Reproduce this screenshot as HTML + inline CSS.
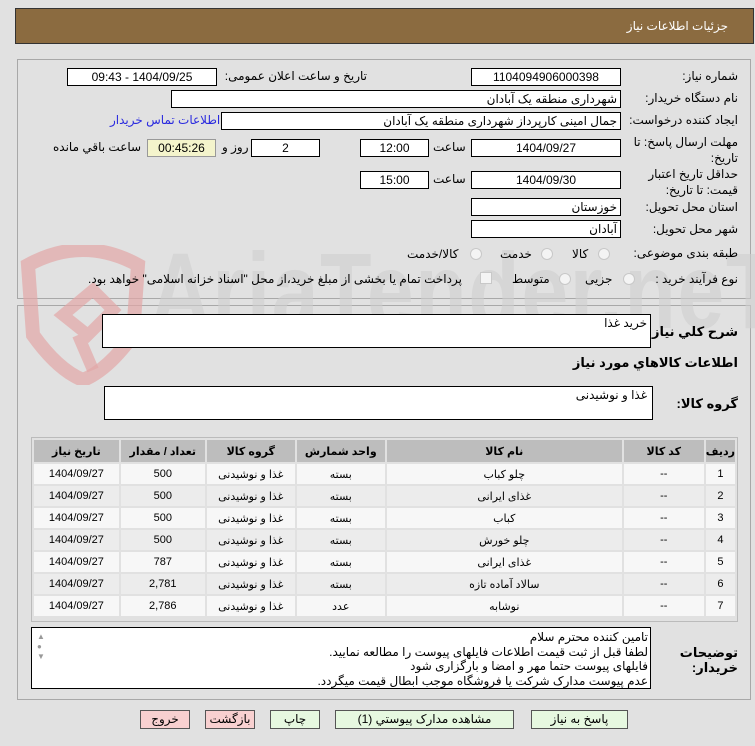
<!DOCTYPE html>
<html><head><meta charset="utf-8"><style>
*{box-sizing:border-box;margin:0;padding:0}
body{width:755px;height:746px;background:#e1e1e1;font-family:"Liberation Sans","DejaVu Sans",sans-serif;font-size:12px;color:#000;position:relative;overflow:hidden}
.a{position:absolute}
.box{position:absolute;background:#fff;border:1px solid #000;height:18px;line-height:16px;font-size:12px;text-align:center;direction:rtl}
.boxr{text-align:right;padding-right:3px}
.lbl{position:absolute;direction:rtl;text-align:right;font-size:12px;white-space:nowrap;letter-spacing:-0.2px}
.b{font-weight:bold}
.rad{position:absolute;width:12px;height:12px;border-radius:50%;border:1px solid #c8c8c8;background:#f4f4f4}
table{border-collapse:separate;border-spacing:2px;direction:rtl}
td,th{height:20px;text-align:center;font-size:11px}
th{background:#bdbdbd;font-weight:bold;font-size:11px;height:22px}
tr.o td{background:#f7f7f7}tr.e td{background:#ececec}
.btn{position:absolute;height:19px;border:1px solid #555;font-size:12px;text-align:center;line-height:17px;direction:rtl}
</style></head><body>
<div class="a" style="left:15px;top:8px;width:739px;height:36px;background:#8b6b40;border:1px solid #333"></div>
<div class="lbl" style="right:27px;top:19px;color:#fff;font-size:12px">جزئیات اطلاعات نیاز</div>

<div class="a" style="left:17px;top:59px;width:734px;height:240px;border:1px solid #a8a8a8"></div>
<div class="a" style="left:17px;top:305px;width:734px;height:395px;border:1px solid #a8a8a8"></div>

<!-- watermark -->
<svg class="a" style="left:18px;top:245px" width="130" height="140" viewBox="0 0 130 140"><path d="M10 20 Q65 -10 120 20 L115 90 Q90 125 65 135 Q40 125 15 90 Z" fill="none" stroke="#e2a7a7" stroke-width="14" opacity=".7"/><path d="M45 70 L75 45 L95 65 L70 90 Z M60 90 L75 125" fill="none" stroke="#e2a7a7" stroke-width="12" opacity=".7"/></svg>
<div class="a" style="left:150px;top:228px;font-size:108px;font-weight:bold;color:#cfcfcf;letter-spacing:2px;opacity:.6;font-family:'Liberation Sans Narrow','Liberation Sans',sans-serif;transform:scaleX(.78);transform-origin:left top">AriaTender.neT</div>

<div class="lbl" style="right:17px;top:69px">شماره نیاز:</div>
<div class="box" style="left:471px;top:68px;width:150px">1104094906000398</div>
<div class="lbl" style="right:388px;top:69px">تاریخ و ساعت اعلان عمومی:</div>
<div class="box" style="left:67px;top:68px;width:150px">1404/09/25 - 09:43</div>

<div class="lbl" style="right:17px;top:91px">نام دستگاه خریدار:</div>
<div class="box boxr" style="left:171px;top:90px;width:450px">شهرداری منطقه یک آبادان</div>

<div class="lbl" style="right:17px;top:113px;letter-spacing:-0.5px">ایجاد کننده درخواست:</div>
<div class="box boxr" style="left:221px;top:112px;width:400px">جمال امینی کارپرداز شهرداری منطقه یک آبادان</div>
<div class="lbl" style="left:110px;top:113px;color:#2a2adf;letter-spacing:-0.5px">اطلاعات تماس خریدار</div>

<div class="lbl" style="right:17px;top:134px;line-height:16px">مهلت ارسال پاسخ: تا<br>تاریخ:</div>
<div class="box" style="left:471px;top:139px;width:150px">1404/09/27</div>
<div class="lbl" style="left:433px;top:140px">ساعت</div>
<div class="box" style="left:360px;top:139px;width:69px">12:00</div>
<div class="box" style="left:251px;top:139px;width:69px">2</div>
<div class="lbl" style="left:222px;top:140px">روز و</div>
<div class="box" style="left:147px;top:139px;width:69px;background:#f4f4cc;border-color:#999">00:45:26</div>
<div class="lbl" style="left:53px;top:140px;letter-spacing:-0.5px">ساعت باقي مانده</div>

<div class="lbl" style="right:17px;top:166px;line-height:16px">حداقل تاریخ اعتبار<br>قیمت: تا تاریخ:</div>
<div class="box" style="left:471px;top:171px;width:150px">1404/09/30</div>
<div class="lbl" style="left:433px;top:172px">ساعت</div>
<div class="box" style="left:360px;top:171px;width:69px">15:00</div>

<div class="lbl" style="right:17px;top:200px">استان محل تحویل:</div>
<div class="box boxr" style="left:471px;top:198px;width:150px">خوزستان</div>
<div class="lbl" style="right:17px;top:222px">شهر محل تحویل:</div>
<div class="box boxr" style="left:471px;top:220px;width:150px">آبادان</div>

<div class="lbl" style="right:17px;top:246px">طبقه بندی موضوعی:</div>
<div class="rad" style="left:598px;top:248px"></div><div class="lbl" style="left:572px;top:247px">کالا</div>
<div class="rad" style="left:541px;top:248px"></div><div class="lbl" style="left:500px;top:247px">خدمت</div>
<div class="rad" style="left:470px;top:248px"></div><div class="lbl" style="left:407px;top:247px">کالا/خدمت</div>

<div class="lbl" style="right:17px;top:272px">نوع فرآیند خرید :</div>
<div class="rad" style="left:623px;top:273px"></div><div class="lbl" style="left:585px;top:272px">جزیی</div>
<div class="rad" style="left:559px;top:273px"></div><div class="lbl" style="left:512px;top:272px">متوسط</div>
<div class="a" style="left:480px;top:272px;width:12px;height:12px;border:1px solid #c8c8c8;background:#f4f4f4"></div>
<div class="lbl" style="left:88px;top:272px;letter-spacing:-0.4px">پرداخت تمام یا بخشی از مبلغ خرید،از محل "اسناد خزانه اسلامی" خواهد بود.</div>

<div class="lbl b" style="right:17px;top:324px;font-size:13px">شرح كلي نياز:</div>
<div class="box boxr" style="left:102px;top:314px;width:549px;height:34px;text-align:right">خرید غذا</div>
<div class="lbl b" style="right:17px;top:355px;font-size:13px">اطلاعات كالاهاي مورد نياز</div>
<div class="lbl b" style="right:17px;top:396px;font-size:13px">گروه کالا:</div>
<div class="box boxr" style="left:104px;top:386px;width:549px;height:34px;text-align:right;padding-right:5px">غذا و نوشیدنی</div>

<div class="a" style="left:31px;top:437px;width:707px;height:185px;border:1px solid #bbb">
<table style="width:705px">
<tr><th style="width:28px">ردیف</th><th style="width:80px">کد کالا</th><th style="width:235px">نام کالا</th><th style="width:88px">واحد شمارش</th><th style="width:88px">گروه کالا</th><th style="width:84px">تعداد / مقدار</th><th>تاریخ نیاز</th></tr>
<tr class="o"><td>1</td><td>--</td><td>چلو کباب</td><td>بسته</td><td>غذا و نوشیدنی</td><td>500</td><td>1404/09/27</td></tr>
<tr class="e"><td>2</td><td>--</td><td>غذای ایرانی</td><td>بسته</td><td>غذا و نوشیدنی</td><td>500</td><td>1404/09/27</td></tr>
<tr class="o"><td>3</td><td>--</td><td>کباب</td><td>بسته</td><td>غذا و نوشیدنی</td><td>500</td><td>1404/09/27</td></tr>
<tr class="e"><td>4</td><td>--</td><td>چلو خورش</td><td>بسته</td><td>غذا و نوشیدنی</td><td>500</td><td>1404/09/27</td></tr>
<tr class="o"><td>5</td><td>--</td><td>غذای ایرانی</td><td>بسته</td><td>غذا و نوشیدنی</td><td>787</td><td>1404/09/27</td></tr>
<tr class="e"><td>6</td><td>--</td><td>سالاد آماده تازه</td><td>بسته</td><td>غذا و نوشیدنی</td><td>2,781</td><td>1404/09/27</td></tr>
<tr class="o"><td>7</td><td>--</td><td>نوشابه</td><td>عدد</td><td>غذا و نوشیدنی</td><td>2,786</td><td>1404/09/27</td></tr>
</table></div>

<div class="lbl b" style="right:17px;top:645px;line-height:15px;font-size:13px">توضیحات<br>خریدار:</div>
<div class="a" style="left:31px;top:627px;width:620px;height:62px;background:#fff;border:1px solid #000;direction:rtl;text-align:right;font-size:12px;line-height:14.5px;padding:2px 2px 0 0">تامین کننده محترم سلام<br>لطفا قبل از ثبت قیمت اطلاعات فایلهای پیوست را مطالعه نمایید.<br>فایلهای پیوست حتما مهر و امضا و بارگزاری شود<br>عدم پیوست مدارک شرکت یا فروشگاه موجب ابطال قیمت میگردد.</div>
<div class="a" style="left:37px;top:632px;font-size:8px;color:#999;line-height:10px">▲<br>●<br>▼</div>

<div class="btn" style="left:140px;top:710px;width:50px;background:#f8d0d0">خروج</div>
<div class="btn" style="left:205px;top:710px;width:50px;background:#f8d0d0">بازگشت</div>
<div class="btn" style="left:270px;top:710px;width:50px;background:#e6f8e0">چاپ</div>
<div class="btn" style="left:335px;top:710px;width:179px;background:#e6f8e0">مشاهده مدارک پیوستي (1)</div>
<div class="btn" style="left:531px;top:710px;width:97px;background:#e6f8e0">پاسخ به نیاز</div>
</body></html>
